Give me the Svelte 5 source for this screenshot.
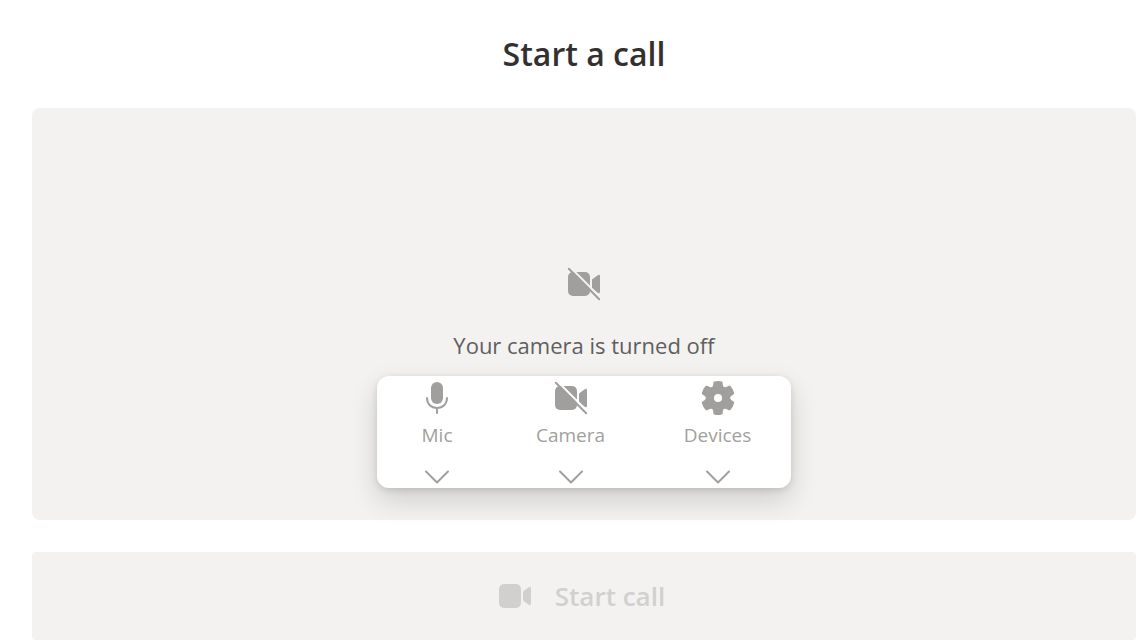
<script>
  const controls = [
    { id: 'mic', label: 'Mic' },
    { id: 'camera', label: 'Camera' },
    { id: 'devices', label: 'Devices' }
  ];
</script>

{#snippet camera(off)}
  <svg class="icon" viewBox="0 0 32 32" aria-hidden="true">
    <rect x="0" y="4" width="22" height="24" rx="5" />
    <path d="M24 11.4 29.7 7.3Q32 5.8 32 8.2V23.8Q32 26.2 29.7 24.7L24 20.6Z" />
    {#if off}
      <path class="gap" d="M1.5 -1.5 33.5 30.5" />
      <path class="slash" d="M.8 .8 31.2 31.2" />
    {/if}
  </svg>
{/snippet}

<main>
  <h1>Start a call</h1>

  <section class="preview">
    {@render camera(true)}
    <p>Your camera is turned off</p>
    <div class="controls">
      {#each controls as control (control.id)}
        <button type="button">
          {#if control.id === 'mic'}
            <svg class="icon" viewBox="0 0 32 32" aria-hidden="true">
              <rect x="10" y="0" width="12" height="22" rx="6" />
              <path class="line" d="M6 16C6 22 10.2 26 16 26S26 22 26 16M16 26V31" />
            </svg>
          {:else if control.id === 'camera'}
            {@render camera(true)}
          {:else}
            <svg class="icon" viewBox="0 0 32 32" aria-hidden="true">
              <path
                fill-rule="evenodd"
                d="M12.2 -.5Q16 -1.5 19.8 -.5Q20.5 -.3 20.6 .5L20.9 3.2Q21.4 6.2 24.2 5L26.9 3.8Q27.8 3.4 28.4 4.1Q31.2 7.2 32.2 10.9Q32.4 11.7 31.8 12.2L29.2 14.1Q27 16 29.2 17.9L31.8 19.8Q32.4 20.3 32.2 21.1Q31.2 24.8 28.4 27.9Q27.8 28.6 26.9 28.2L24.2 27Q21.4 25.8 20.9 28.8L20.6 31.5Q20.5 32.3 19.8 32.5Q16 33.5 12.2 32.5Q11.5 32.3 11.4 31.5L11.1 28.8Q10.6 25.8 7.8 27L5.1 28.2Q4.2 28.6 3.6 27.9Q.8 24.8 -.2 21.1Q-.4 20.3 .2 19.8L2.8 17.9Q5 16 2.8 14.1L.2 12.2Q-.4 11.7 -.2 10.9Q.8 7.2 3.6 4.1Q4.2 3.4 5.1 3.8L7.8 5Q10.6 6.2 11.1 3.2L11.4 .5Q11.5 -.3 12.2 -.5ZM16 12A4 4 0 1 0 16 20A4 4 0 1 0 16 12Z"
              />
            </svg>
          {/if}
          <span>{control.label}</span>
          <svg class="chevron" viewBox="0 0 24 14" aria-hidden="true">
            <path class="line" d="M1 1.5 12 12.5 23 1.5" />
          </svg>
        </button>
      {/each}
    </div>
  </section>

  <button class="start" type="button" disabled>
    {@render camera(false)}
    <span>Start call</span>
  </button>
</main>

<style>
  :global(body) {
    margin: 0;
    background: #fff;
  }

  main {
    display: flex;
    flex-direction: column;
    gap: 32px;
    padding: 32px 0 0 32px;
    color: #323130;
    font-family: 'Segoe UI', 'Open Sans', 'Noto Sans', sans-serif;
  }

  h1 {
    margin: 0;
    font-size: 32px;
    line-height: 44px;
    font-weight: 600;
    text-align: center;
  }

  button {
    border: 0;
    font: inherit;
  }

  .icon,
  .chevron {
    display: block;
    flex: none;
    width: 32px;
    height: 32px;
    overflow: visible;
    fill: currentColor;
  }

  .chevron {
    width: 24px;
    height: 14px;
  }

  .line,
  .slash,
  .gap {
    fill: none;
    stroke: currentColor;
    stroke-width: 2;
    stroke-linecap: round;
    stroke-linejoin: round;
  }

  .gap {
    stroke: var(--surface);
  }

  .preview {
    --surface: #f3f2f1;
    display: flex;
    flex-direction: column;
    align-items: center;
    padding: 160px 0 32px;
    border-radius: 8px;
    background: var(--surface);
    color: #a19f9d;
  }

  .preview p {
    margin: 29px 0 15px;
    color: #605e5c;
    font-size: 22px;
    line-height: 32px;
  }

  .controls {
    --surface: #fff;
    display: grid;
    grid-template-columns: 120px 147px 147px;
    border-radius: 12px;
    background: var(--surface);
    box-shadow:
      0 12px 28px rgb(0 0 0 / 15%),
      0 2px 7px rgb(0 0 0 / 12%);
  }

  .controls button {
    display: flex;
    flex-direction: column;
    align-items: center;
    padding: 6px 0 4px;
    background: none;
    color: inherit;
    font-size: 19px;
  }

  .controls span {
    margin: 7px 0 21px;
    line-height: 28px;
  }

  .start {
    display: flex;
    align-items: center;
    justify-content: center;
    gap: 24px;
    padding: 24px 4px 24px 0;
    border-radius: 4px;
    background: #f3f2f1;
    color: #d2d0ce;
    font-size: 26px;
    line-height: 40px;
    font-weight: 600;
  }
</style>
